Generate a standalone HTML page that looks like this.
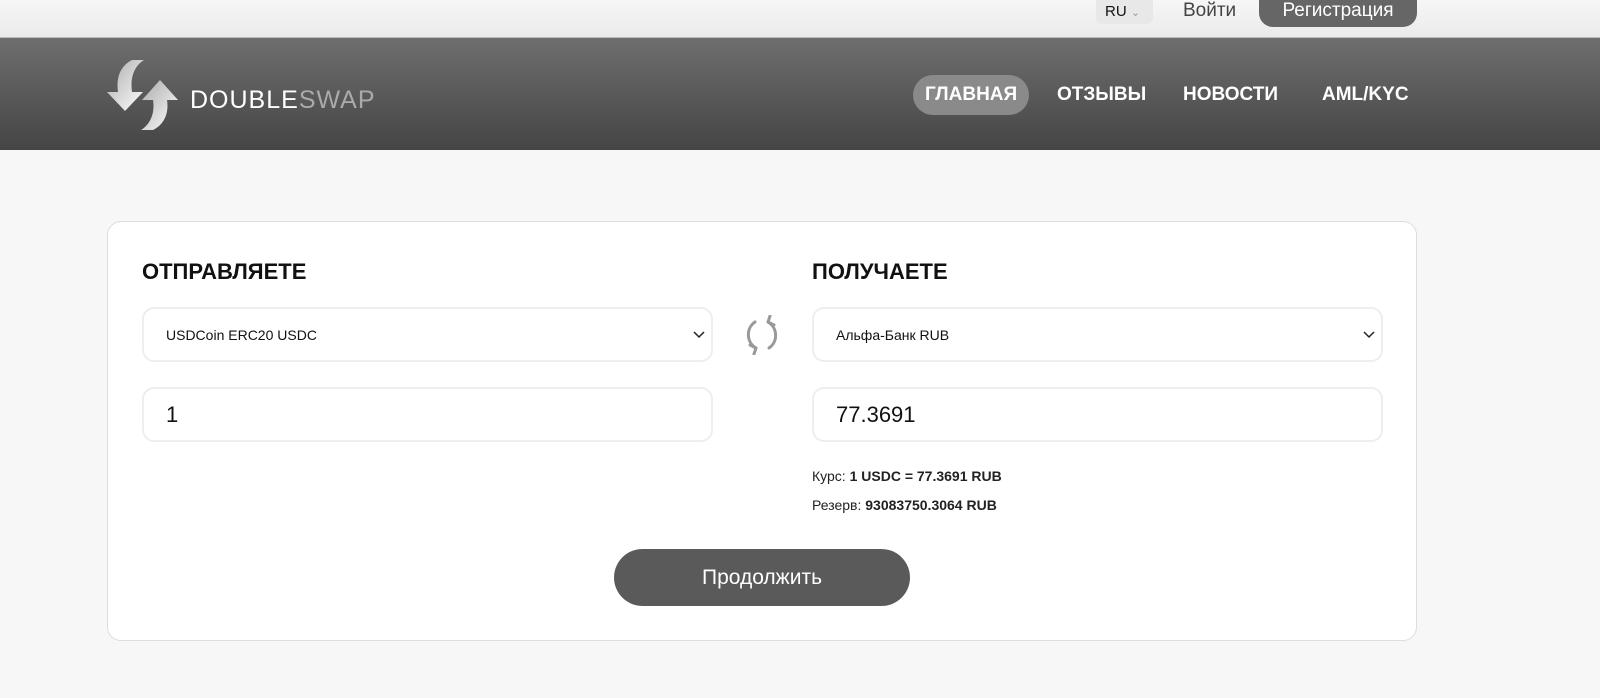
<!DOCTYPE html>
<html><head><meta charset="utf-8"><style>
*{box-sizing:border-box;margin:0;padding:0}
body{width:1600px;height:698px;background:#f7f7f7;font-family:"Liberation Sans","DejaVu Sans",sans-serif;position:relative;overflow:hidden;color:#111}
.top{position:absolute;left:0;top:0;width:1600px;height:38px;background:linear-gradient(#f6f6f6,#ebebeb);border-bottom:1px solid #bbb}
.hdr{position:absolute;left:0;top:38px;width:1600px;height:112px;background:linear-gradient(#6e6e6e,#454545)}
.abs{position:absolute}
.nav{color:#fff;font-size:19px;font-weight:bold;top:84px}
.card{position:absolute;left:107px;top:221px;width:1310px;height:420px;background:#fff;border:1px solid #ddd;border-radius:14px}
.h{position:absolute;font-size:22px;font-weight:bold;color:#111}
.box{position:absolute;height:55px;border:2px solid #eee;border-radius:12px;background:#fff;padding-left:22px;display:flex;align-items:center}
.sel{font-size:14px}
.inp{font-size:22px}
.chev{position:absolute;right:6px;top:22px}
.sm{position:absolute;font-size:14px;color:#222}
</style></head><body>
<div class="top"></div>
<div class="abs" style="left:1096px;top:0;width:57px;height:24px;background:#e8e8e8;border-radius:0 0 6px 6px;font-size:15px;padding:3px 0 0 9px">RU <span style="color:#999;font-size:11px">⌄</span></div>
<div class="abs" style="left:1183px;top:0;font-size:19px;color:#444">Войти</div>
<div class="abs" style="left:1259px;top:0;width:158px;height:27px;background:#666;border-radius:0 0 14px 14px;color:#fff;font-size:19px;text-align:center;line-height:22px">Регистрация</div>
<div class="hdr"></div>
<svg class="abs" style="left:104px;top:58px" width="76" height="76" viewBox="0 0 76 76">
<defs><linearGradient id="g" x1="0" y1="0" x2="1" y2="1"><stop offset="0" stop-color="#aaa"/><stop offset="1" stop-color="#fff"/></linearGradient></defs>
<path d="M28 2 C16 8 12 20 14 34 L3 34 L21 53 L39 34 L28 34 C26 20 30 8 40 2Z" fill="url(#g)"/>
<path d="M49 72 C61 66 65 54 63 42 L74 42 L56 22 L38 42 L49 42 C51 54 47 66 37 72Z" fill="url(#g)"/>
</svg>
<div class="abs" style="left:190px;top:86px;font-size:25px;color:#fff;letter-spacing:1px">DOUBLE<span style="color:#aaa">SWAP</span></div>
<div class="abs" style="left:913px;top:75px;width:116px;height:40px;background:#8a8a8a;border-radius:20px"></div>
<div class="abs nav" style="left:925px">ГЛАВНАЯ</div>
<div class="abs nav" style="left:1057px">ОТЗЫВЫ</div>
<div class="abs nav" style="left:1183px">НОВОСТИ</div>
<div class="abs nav" style="left:1322px">AML/KYC</div>
<div class="card"></div>
<div class="h" style="left:142px;top:259px">ОТПРАВЛЯЕТЕ</div>
<div class="h" style="left:812px;top:259px">ПОЛУЧАЕТЕ</div>
<div class="box sel" style="left:142px;top:307px;width:571px">USDCoin ERC20 USDC<svg class="chev" width="12" height="8"><path d="M1 1l5 5 5-5" stroke="#222" stroke-width="1.5" fill="none"/></svg></div>
<div class="box sel" style="left:812px;top:307px;width:571px">Альфа-Банк RUB<svg class="chev" width="12" height="8"><path d="M1 1l5 5 5-5" stroke="#222" stroke-width="1.5" fill="none"/></svg></div>
<div class="box inp" style="left:142px;top:387px;width:571px">1</div>
<div class="box inp" style="left:812px;top:387px;width:571px">77.3691</div>
<svg class="abs" style="left:742px;top:315px" width="40" height="40" viewBox="0 0 40 40" fill="none" stroke="#999" stroke-width="3" stroke-linecap="round" stroke-linejoin="round">
<path d="M13 7 C4 13 4 27 14 33"/><path d="M8 30 L14 33 L12 39"/>
<path d="M27 33 C36 27 36 13 26 7"/><path d="M32 10 L26 7 L28 1"/></svg>
<div class="sm" style="left:812px;top:468px">Курс: <b style="font-weight:600">1 USDC = 77.3691 RUB</b></div>
<div class="sm" style="left:812px;top:497px">Резерв: <b style="font-weight:600">93083750.3064 RUB</b></div>
<div class="abs" style="left:614px;top:549px;width:296px;height:57px;background:#5a5a5a;border-radius:29px;color:#fff;font-size:21px;text-align:center;line-height:57px">Продолжить</div>
</body></html>
